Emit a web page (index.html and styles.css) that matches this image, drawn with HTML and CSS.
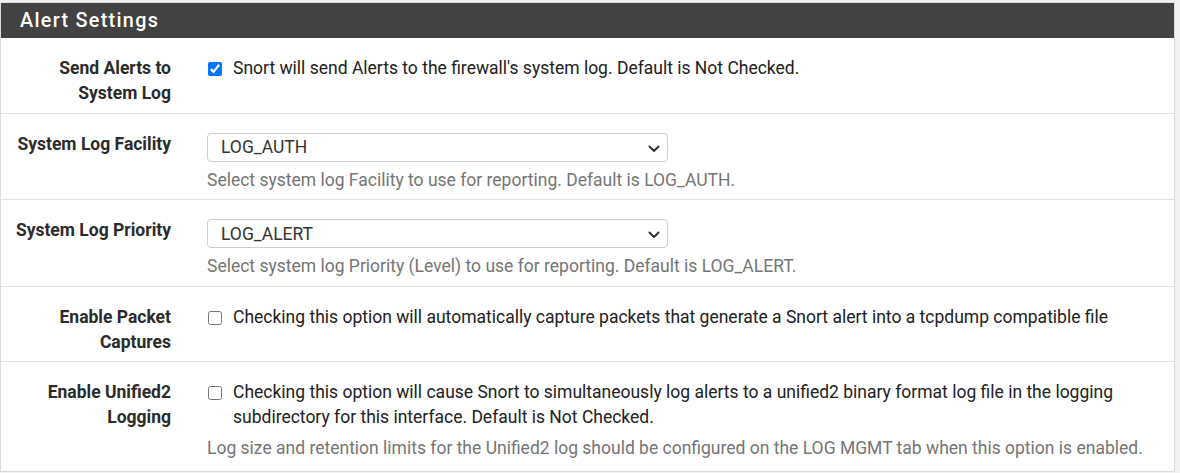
FILE: index.html
```html
<!DOCTYPE html>
<html>
<head>
<meta charset="utf-8">
<link rel="stylesheet" href="styles.css">
</head>
<body>
<div class="panel">
  <div class="panel-heading">Alert Settings</div>
  <div class="row">
    <div class="label">Send Alerts to<br>System Log</div>
    <div class="content">
      <label class="check"><input type="checkbox" checked><span>Snort will send Alerts to the firewall's system log. Default is Not Checked.</span></label>
    </div>
  </div>
  <div class="row">
    <div class="label">System Log Facility</div>
    <div class="content">
      <div class="select-wrap">
        <select class="select"><option>LOG_AUTH</option></select>
        <svg class="chevron" width="12" height="8" viewBox="0 0 12 8"><path d="M1.5 1.5 L6 6 L10.5 1.5" fill="none" stroke="#333" stroke-width="2" stroke-linecap="round" stroke-linejoin="round"/></svg>
      </div>
      <div class="help">Select system log Facility to use for reporting. Default is LOG_AUTH.</div>
    </div>
  </div>
  <div class="row">
    <div class="label">System Log Priority</div>
    <div class="content">
      <div class="select-wrap">
        <select class="select"><option>LOG_ALERT</option></select>
        <svg class="chevron" width="12" height="8" viewBox="0 0 12 8"><path d="M1.5 1.5 L6 6 L10.5 1.5" fill="none" stroke="#333" stroke-width="2" stroke-linecap="round" stroke-linejoin="round"/></svg>
      </div>
      <div class="help">Select system log Priority (Level) to use for reporting. Default is LOG_ALERT.</div>
    </div>
  </div>
  <div class="row">
    <div class="label">Enable Packet<br>Captures</div>
    <div class="content">
      <label class="check"><input type="checkbox"><span>Checking this option will automatically capture packets that generate a Snort alert into a tcpdump compatible file</span></label>
    </div>
  </div>
  <div class="row last">
    <div class="label">Enable Unified2<br>Logging</div>
    <div class="content">
      <label class="check"><input type="checkbox"><span>Checking this option will cause Snort to simultaneously log alerts to a unified2 binary format log file in the logging subdirectory for this interface. Default is Not Checked.</span></label>
      <div class="help">Log size and retention limits for the Unified2 log should be configured on the LOG MGMT tab when this option is enabled.</div>
    </div>
  </div>
</div>
</body>
</html>
```
FILE: styles.css
```css
html, body {
  margin: 0;
  padding: 0;
}
body {
  background: #f0f0f0;
  padding-top: 2px;
  font-family: Roboto, "Liberation Sans", sans-serif;
  font-size: 17.5px;
  line-height: 25px;
  color: #212121;
}
.panel {
  width: 1173px;
  background: #fff;
  border: 1px solid #dcdcdc;
}
.panel-heading {
  height: 35px;
  background: #424242;
  color: #fff;
  font-size: 19.8px;
  font-weight: 500;
  letter-spacing: 1.3px;
  line-height: 35px;
  padding-left: 19px;
}
.row {
  display: flex;
  padding: 18px 0 6.6px;
  border-bottom: 1px solid #e2e2e2;
}
.row.last {
  border-bottom: none;
}
.label {
  flex: 0 0 170px;
  text-align: right;
  font-weight: 700;
  color: #2b2b2b;
}
.content {
  flex: 1;
  padding-left: 36px;
  padding-right: 15px;
}
.check {
  display: flex;
  align-items: flex-start;
}
.check input {
  width: 14px;
  height: 14px;
  margin: 6px 11px 0 1px;
  flex: 0 0 auto;
}
.select-wrap {
  position: relative;
  width: 461px;
}
.select {
  display: block;
  width: 461px;
  height: 29px;
  appearance: none;
  -webkit-appearance: none;
  background: #fff;
  border: 1px solid #cfcfcf;
  border-radius: 4px;
  padding: 0 0 0 13px;
  font-family: Roboto, "Liberation Sans", sans-serif;
  font-size: 17.5px;
  color: #333;
  margin: 1px 0 0 0;
}
.chevron {
  position: absolute;
  right: 8px;
  top: 12px;
}
.help {
  color: #757575;
  margin-top: 6px;
  margin-bottom: 0;
}
.row.last .help {
  margin-top: 6px;
  margin-bottom: 3px;
}
```
